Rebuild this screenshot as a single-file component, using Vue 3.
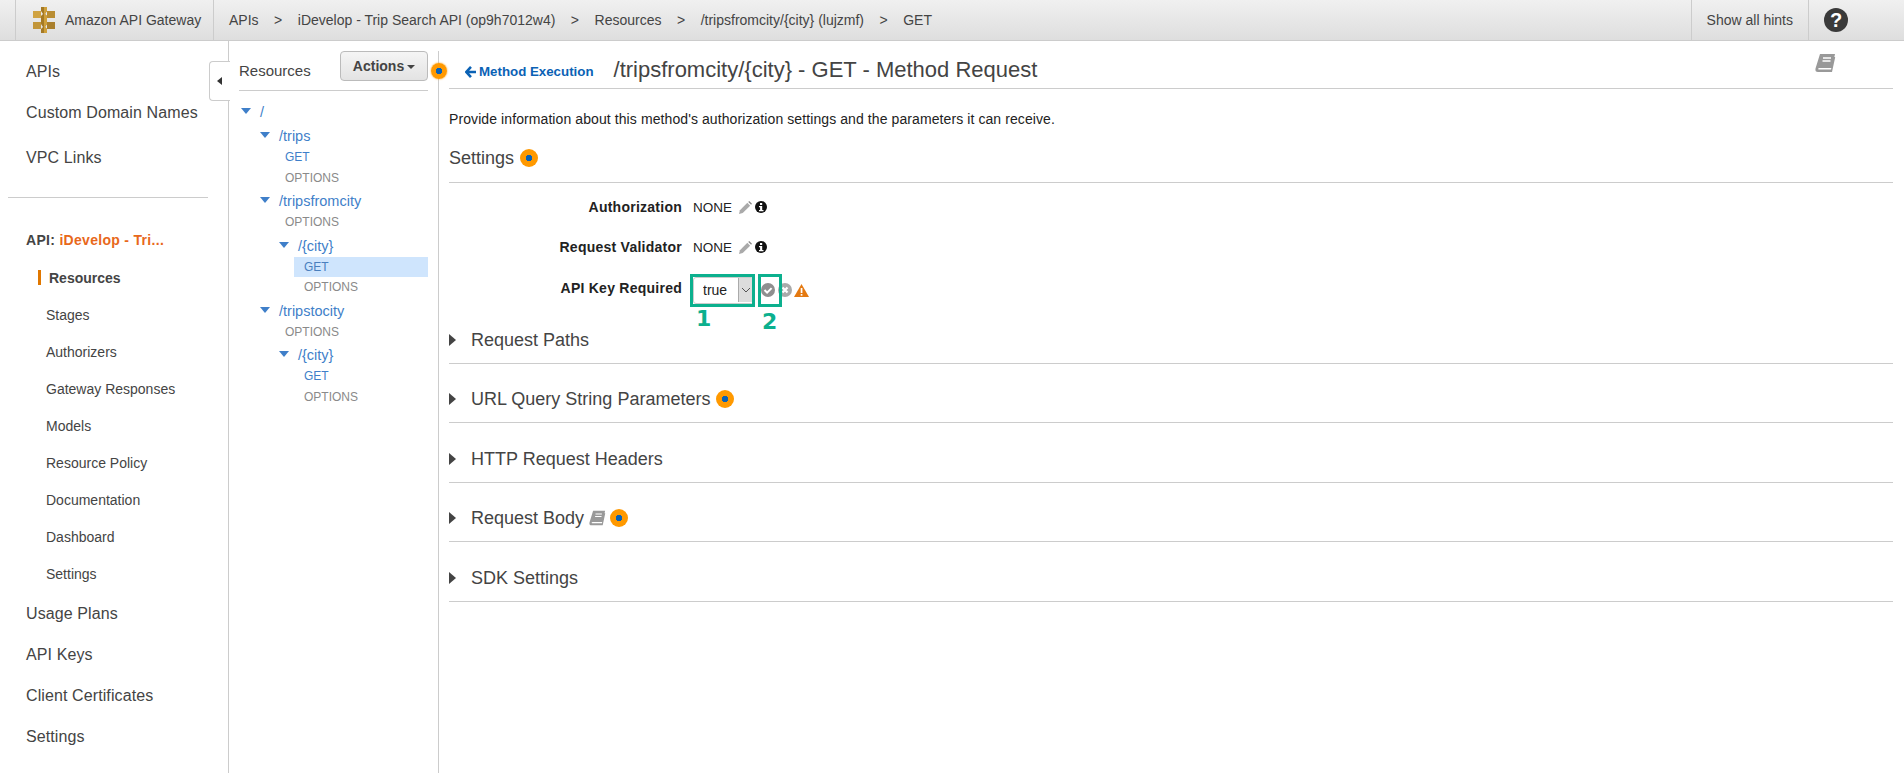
<template>
  <div class="page">
    <svg class="defs" width="0" height="0">
      <symbol id="book" viewBox="0 0 21 20">
        <path d="M5 1h15l-3 14H4.500c-1.500 0-2 1.600-.6 1.600H16l3-13 1.200.6L17 19H3c-2 0-3-1-2.500-3.500z" fill="#999" />
        <path d="M8 5h8M7.500 8h8" stroke="#fff" stroke-width="1.300" />
      </symbol>
      <symbol id="pencil" viewBox="0 0 14 14">
        <path d="M0 14l1-4 8-8 3 3-8 8z" fill="#aaa" />
        <path d="M10 1l1-1 3 3-1 1z" fill="#888" />
      </symbol>
      <symbol id="info" viewBox="0 0 12 12">
        <circle cx="6" cy="6" r="6" fill="#111" />
        <rect x="5" y="2" width="2.200" height="2" fill="#fff" />
        <path d="M4 5h3.200v4H8.500v1.300h-4.500V9h1.100V6.300H4z" fill="#fff" />
      </symbol>
      <symbol id="tick" viewBox="0 0 14 14">
        <circle cx="7" cy="7" r="7" fill="#8f8f8f" />
        <path d="M3.500 7l2.600 2.600 4.500-4.500" fill="none" stroke="#fff" stroke-width="2" />
      </symbol>
      <symbol id="cross" viewBox="0 0 14 14">
        <circle cx="7" cy="7" r="7" fill="#aaa" />
        <path d="M4.500 4.500l5 5m0-5l-5 5" stroke="#fff" stroke-width="2.200" />
      </symbol>
    </svg>

    <header class="topbar">
      <div class="brand">
        <svg class="logo" viewBox="0 0 22 26" width="22" height="26">
          <rect x="0" y="4" width="8" height="7" fill="#d0a342" />
          <rect x="14" y="4" width="8" height="7" fill="#b98d33" />
          <rect x="0" y="15" width="8" height="7" fill="#c2963a" />
          <rect x="14" y="15" width="8" height="7" fill="#a97f2c" />
          <path d="M8 0h6v4l-2 3 2 2v8l-2 3 2 2v4H8v-4l2-2-2-3V9l2-2-2-3z" fill="#a57a25" />
          <path d="M11 0h3v4l-2 3 2 2v8l-2 3 2 2v4h-3z" fill="#cfa03b" />
        </svg>
        <span>Amazon API Gateway</span>
      </div>
      <nav class="crumbs">
        <template v-for="(crumb, i) in crumbs" :key="crumb">
          <span v-if="i > 0" class="sep">&gt;</span>
          <span>{{ crumb }}</span>
        </template>
      </nav>
      <a class="hints-toggle">Show all hints</a>
      <div class="help"><span>?</span></div>
    </header>

    <div class="body">
      <aside class="sidebar">
        <a class="nav-top first">APIs</a>
        <a class="nav-top">Custom Domain Names</a>
        <a class="nav-top vpc">VPC Links</a>
        <hr class="nav-rule" />
        <div class="api-name"><b>API:</b> <span>iDevelop - Tri...</span></div>
        <a class="nav-sub active">Resources</a>
        <a v-for="item in subNav" :key="item" class="nav-sub">{{ item }}</a>
        <a v-for="item in bottomNav" :key="item" class="nav-top bottom">{{ item }}</a>
      </aside>

      <section class="resources">
        <button class="collapse"><i></i></button>
        <div class="res-head">
          <span class="res-title">Resources</span>
          <button class="actions">Actions<i></i></button>
        </div>
        <span class="hint on-divider"></span>
        <ul class="tree">
          <li
            v-for="(node, i) in tree"
            :key="i"
            :class="[node.method ? 'method' : 'folder', 'depth-' + node.depth, { selected: node.selected, muted: node.label === 'OPTIONS' }]"
          >
            <i v-if="!node.method" class="caret"></i>
            {{ node.label }}
          </li>
        </ul>
      </section>

      <main class="content">
        <div class="page-head">
          <a class="back">
            <svg viewBox="0 0 12 12" width="11" height="12">
              <path d="M6.500 0.500L1.500 6l5 5.500M2 6H12" fill="none" stroke="#0b62b5" stroke-width="2.800" />
            </svg>
            Method Execution
          </a>
          <h1>/tripsfromcity/{city} - GET - Method Request</h1>
          <svg class="head-book"><use href="#book" /></svg>
        </div>

        <p class="desc">Provide information about this method's authorization settings and the parameters it can receive.</p>

        <div class="settings-head">Settings <span class="hint"></span></div>

        <div class="key-rows">
          <div class="key-row">
            <label>Authorization</label>
            <span class="val">NONE</span>
            <svg class="ico-pencil"><use href="#pencil" /></svg>
            <svg class="ico-info"><use href="#info" /></svg>
          </div>
          <div class="key-row">
            <label>Request Validator</label>
            <span class="val">NONE</span>
            <svg class="ico-pencil"><use href="#pencil" /></svg>
            <svg class="ico-info"><use href="#info" /></svg>
          </div>
          <div class="key-row api-key">
            <label class="raised">API Key Required</label>
            <div class="select-wrap">
              <select>
                <option>true</option>
                <option>false</option>
              </select>
              <span class="select-arrow">
                <svg viewBox="0 0 10 6" width="10" height="6">
                  <path d="M1 1l4 4 4-4" fill="none" stroke="#555" stroke-width="1" />
                </svg>
              </span>
              <span class="mark mark-one"></span>
              <span class="mark-num num-one">1</span>
            </div>
            <div class="confirm">
              <svg class="ico-round tick"><use href="#tick" /></svg>
              <span class="mark mark-two"></span>
              <span class="mark-num num-two">2</span>
              <svg class="ico-round"><use href="#cross" /></svg>
              <svg class="ico-warn" viewBox="0 0 15 13" width="15" height="13">
                <path d="M7.500 0L15 13H0z" fill="#e47911" />
                <rect x="6.700" y="4" width="1.700" height="5" fill="#fff" />
                <rect x="6.700" y="10" width="1.700" height="1.700" fill="#fff" />
              </svg>
            </div>
          </div>
        </div>

        <div v-for="sec in sections" :key="sec.name" class="section">
          <i class="arrow"></i>
          <span>{{ sec.name }}</span>
          <svg v-if="sec.book" class="sec-book"><use href="#book" /></svg>
          <span v-if="sec.hint" class="hint"></span>
        </div>
      </main>
    </div>
  </div>
</template>

<script setup>
  const crumbs = ['APIs', 'iDevelop - Trip Search API (op9h7012w4)', 'Resources', '/tripsfromcity/{city} (lujzmf)', 'GET']

  const subNav = ['Stages', 'Authorizers', 'Gateway Responses', 'Models', 'Resource Policy', 'Documentation', 'Dashboard', 'Settings']
  const bottomNav = ['Usage Plans', 'API Keys', 'Client Certificates', 'Settings']

  const tree = [
    { label: '/', depth: 0 },
    { label: '/trips', depth: 1 },
    { label: 'GET', depth: 1, method: true },
    { label: 'OPTIONS', depth: 1, method: true },
    { label: '/tripsfromcity', depth: 1 },
    { label: 'OPTIONS', depth: 1, method: true },
    { label: '/{city}', depth: 2 },
    { label: 'GET', depth: 2, method: true, selected: true },
    { label: 'OPTIONS', depth: 2, method: true },
    { label: '/tripstocity', depth: 1 },
    { label: 'OPTIONS', depth: 1, method: true },
    { label: '/{city}', depth: 2 },
    { label: 'GET', depth: 2, method: true },
    { label: 'OPTIONS', depth: 2, method: true },
  ]

  const sections = [
    { name: 'Request Paths' },
    { name: 'URL Query String Parameters', hint: true },
    { name: 'HTTP Request Headers' },
    { name: 'Request Body', book: true, hint: true },
    { name: 'SDK Settings' },
  ]
</script>

<style>
  html,
  body {
    background: #fff;
    overflow: hidden;
  }
</style>

<style scoped>
  .page {
    width: 1904px;
    height: 773px;
    font-family: 'Liberation Sans', Arial, sans-serif;
    font-size: 14px;
    color: #444;
    overflow: hidden;
  }

  .defs {
    position: absolute;
  }

  .topbar {
    display: flex;
    align-items: center;
    height: 41px;
    box-sizing: border-box;
    border-bottom: 1px solid #ccc;
    background: linear-gradient(#f0f0f0, #dedede);
  }

  .brand {
    display: flex;
    align-items: center;
    gap: 10px;
    height: 40px;
    width: 199px;
    margin-left: 15px;
    padding-left: 17px;
    box-sizing: border-box;
    border-left: 1px solid #ccc;
    border-right: 1px solid #ccc;
    white-space: nowrap;
  }

  .crumbs {
    display: flex;
    align-items: center;
    margin-left: 15px;
    white-space: nowrap;
  }

  .sep {
    margin: 0 15.500px;
  }

  .hints-toggle {
    display: flex;
    align-items: center;
    height: 40px;
    margin-left: auto;
    padding: 0 15px;
    border-left: 1px solid #ccc;
    border-right: 1px solid #ccc;
  }

  .help {
    display: flex;
    align-items: center;
    justify-content: center;
    width: 24px;
    height: 24px;
    margin: 0 56px 0 15px;
    border-radius: 50%;
    background: #3a3a3a;
    color: #fff;
    font-size: 20px;
    font-weight: bold;
  }

  .body {
    display: flex;
    height: 732px;
  }

  .sidebar {
    display: flex;
    flex-direction: column;
    flex: none;
    width: 229px;
    box-sizing: border-box;
    border-right: 1px solid #ccc;
    padding-left: 26px;
  }

  .nav-top {
    display: block;
    height: 41px;
    line-height: 41px;
    font-size: 16px;
    letter-spacing: 0.1px;
    white-space: nowrap;
  }

  .nav-top.first {
    margin-top: 10px;
  }

  .nav-top.vpc {
    margin-top: 4px;
  }

  .nav-rule {
    width: 200px;
    height: 1px;
    margin: 19px 0 0 -18px;
    border: 0;
    background: #ccc;
  }

  .api-name {
    height: 20px;
    margin-top: 32px;
    line-height: 20px;
    font-weight: bold;
    letter-spacing: 0.3px;
    white-space: nowrap;
  }

  .api-name span {
    color: #e8681b;
  }

  .nav-sub {
    display: block;
    height: 37px;
    line-height: 37px;
    margin-left: 20px;
    white-space: nowrap;
  }

  .nav-sub.active {
    position: relative;
    margin-top: 10px;
    margin-left: 23px;
    font-weight: bold;
  }

  .nav-sub.active::before {
    content: '';
    position: absolute;
    left: -11px;
    top: 10px;
    width: 3px;
    height: 15px;
    background: #e07700;
  }

  .resources {
    position: relative;
    flex: none;
    width: 210px;
    box-sizing: border-box;
    margin-top: 10px;
    padding: 0 10px;
    border-right: 1px solid #ccc;
  }

  .collapse {
    position: absolute;
    left: -20px;
    top: 10px;
    width: 21px;
    height: 40px;
    padding: 0;
    box-sizing: border-box;
    background: #fff;
    border: 1px solid #ccc;
    border-right: 0;
    border-radius: 4px 0 0 4px;
  }

  .collapse i {
    display: block;
    width: 0;
    height: 0;
    margin-left: 7px;
    border: 4px solid transparent;
    border-left: 0;
    border-right: 5px solid #333;
  }

  .res-head {
    display: flex;
    justify-content: space-between;
    align-items: flex-start;
    height: 39px;
    border-bottom: 1px solid #ccc;
  }

  .res-title {
    margin-top: 10px;
    font-size: 15px;
    line-height: 20px;
  }

  .actions {
    width: 88px;
    height: 30px;
    padding: 0 0 1px;
    border: 1px solid #bbb;
    border-radius: 4px;
    background: linear-gradient(#f5f5f5, #e3e3e3);
    color: #444;
    font: bold 14px 'Liberation Sans', Arial, sans-serif;
  }

  .actions i {
    display: inline-block;
    margin-left: 3px;
    vertical-align: middle;
    border: 4px solid transparent;
    border-top-color: #444;
    border-bottom: 0;
  }

  .hint {
    display: inline-block;
    flex: none;
    box-sizing: border-box;
    width: 18px;
    height: 18px;
    border-radius: 50%;
    background: radial-gradient(circle, #0b62b5 0 3px, #f90 3.500px);
  }

  .hint.on-divider {
    position: absolute;
    right: -8.500px;
    top: 12px;
    width: 16px;
    height: 16px;
    box-shadow: 0 0 2px #f90;
  }

  .tree {
    margin: 8px 0 0;
    padding: 0;
    list-style: none;
    color: #3f7fc9;
  }

  .tree li {
    position: relative;
    white-space: nowrap;
  }

  .folder {
    height: 24px;
    box-sizing: border-box;
    padding-top: 2px;
    line-height: 22px;
    font-size: 14.500px;
  }

  .method {
    height: 20.500px;
    line-height: 20px;
    font-size: 12px;
  }

  .folder.depth-0 {
    padding-left: 21px;
  }

  .folder.depth-1 {
    padding-left: 40px;
  }

  .folder.depth-2 {
    padding-left: 59px;
  }

  .method.depth-1 {
    padding-left: 46px;
  }

  .method.depth-2 {
    padding-left: 65px;
  }

  .method.muted {
    color: #8a8a8a;
  }

  .method.selected {
    margin-left: 55px;
    padding-left: 10px;
    background: #cfe5fd;
    color: #4a7fbd;
  }

  .caret {
    position: absolute;
    top: 9px;
    border: 5.500px solid transparent;
    border-top: 6px solid #3f7fc9;
    border-bottom: 0;
  }

  .depth-0 .caret {
    left: 2px;
  }

  .depth-1 .caret {
    left: 21px;
  }

  .depth-2 .caret {
    left: 40px;
  }

  .content {
    flex: 1;
    min-width: 0;
    padding: 0 11px 0 10px;
  }

  .page-head {
    display: flex;
    align-items: center;
    height: 48px;
    box-sizing: border-box;
    padding-top: 17px;
    padding-bottom: 6px;
    border-bottom: 1px solid #ccc;
  }

  .back {
    display: flex;
    align-items: center;
    gap: 3px;
    margin-left: 16px;
    padding-top: 3px;
    color: #0b62b5;
    font-size: 13.300px;
    font-weight: bold;
    white-space: nowrap;
  }

  h1 {
    margin: 0 0 0 20px;
    font-size: 22px;
    font-weight: normal;
    white-space: nowrap;
  }

  .head-book {
    width: 21px;
    height: 20px;
    margin: -15px 57px 0 auto;
  }

  .desc {
    margin: 20px 0 0;
    line-height: 20px;
    letter-spacing: 0.09px;
    color: #222;
  }

  .settings-head {
    display: flex;
    align-items: center;
    gap: 6px;
    height: 37px;
    box-sizing: border-box;
    margin-top: 17px;
    padding-bottom: 12px;
    border-bottom: 1px solid #ccc;
    font-size: 18px;
    line-height: 24px;
  }

  .key-rows {
    margin: 4px 0 -6px;
  }

  .key-row {
    display: flex;
    align-items: center;
    height: 40px;
  }

  .key-row.api-key {
    margin-top: 3px;
  }

  .key-row label {
    flex: none;
    width: 233px;
    text-align: right;
    font-weight: bold;
    letter-spacing: 0.25px;
    color: #222;
  }

  .key-row label.raised {
    margin-top: -5px;
  }

  .val {
    margin-left: 11px;
    font-size: 13.500px;
    color: #222;
  }

  .ico-pencil {
    width: 13px;
    height: 13px;
    margin-left: 7px;
  }

  .ico-info {
    width: 12px;
    height: 12px;
    margin-left: 3px;
  }

  .select-wrap {
    position: relative;
    margin-left: 11px;
    width: 61px;
    height: 27px;
  }

  select {
    width: 61px;
    height: 27px;
    padding-left: 9px;
    appearance: none;
    box-sizing: border-box;
    border: 1px solid #ccc;
    border-radius: 3px;
    background: #fff;
    color: #222;
    font: 14px 'Liberation Sans', Arial, sans-serif;
  }

  .select-arrow {
    position: absolute;
    right: 1px;
    top: 1px;
    display: flex;
    align-items: center;
    justify-content: center;
    width: 13px;
    height: 24px;
    background: #ddd;
    border-left: 1px solid #aaa;
    border-right: 1px solid #aaa;
  }

  .mark {
    position: absolute;
    box-sizing: border-box;
    border: 3px solid #0cb08e;
  }

  .mark-one {
    left: -3px;
    top: -3px;
    width: 65px;
    height: 33px;
  }

  .mark-num {
    position: absolute;
    color: #0cb08e;
    font-family: 'DejaVu Sans', sans-serif;
    font-size: 22px;
    font-weight: bold;
    line-height: 22px;
  }

  .num-one {
    left: 3px;
    top: 31px;
  }

  .confirm {
    position: relative;
    display: flex;
    align-items: center;
    gap: 3px;
    margin-left: 7px;
  }

  .ico-round {
    width: 14px;
    height: 14px;
  }

  .mark-two {
    left: -3px;
    top: -9px;
    width: 24px;
    height: 33px;
  }

  .num-two {
    left: 1px;
    top: 28px;
  }

  .ico-warn {
    margin-left: -1px;
  }

  .section {
    display: flex;
    align-items: center;
    gap: 6px;
    height: 59.500px;
    box-sizing: border-box;
    padding-top: 24px;
    padding-bottom: 11px;
    border-bottom: 1px solid #ccc;
    font-size: 18px;
    line-height: 24px;
  }

  .arrow {
    flex: none;
    width: 0;
    height: 0;
    margin-right: 9px;
    border: 6px solid transparent;
    border-right: 0;
    border-left: 7px solid #444;
  }

  .sec-book {
    width: 17px;
    height: 16px;
    margin: 0 -2px 0 -1px;
  }
</style>
